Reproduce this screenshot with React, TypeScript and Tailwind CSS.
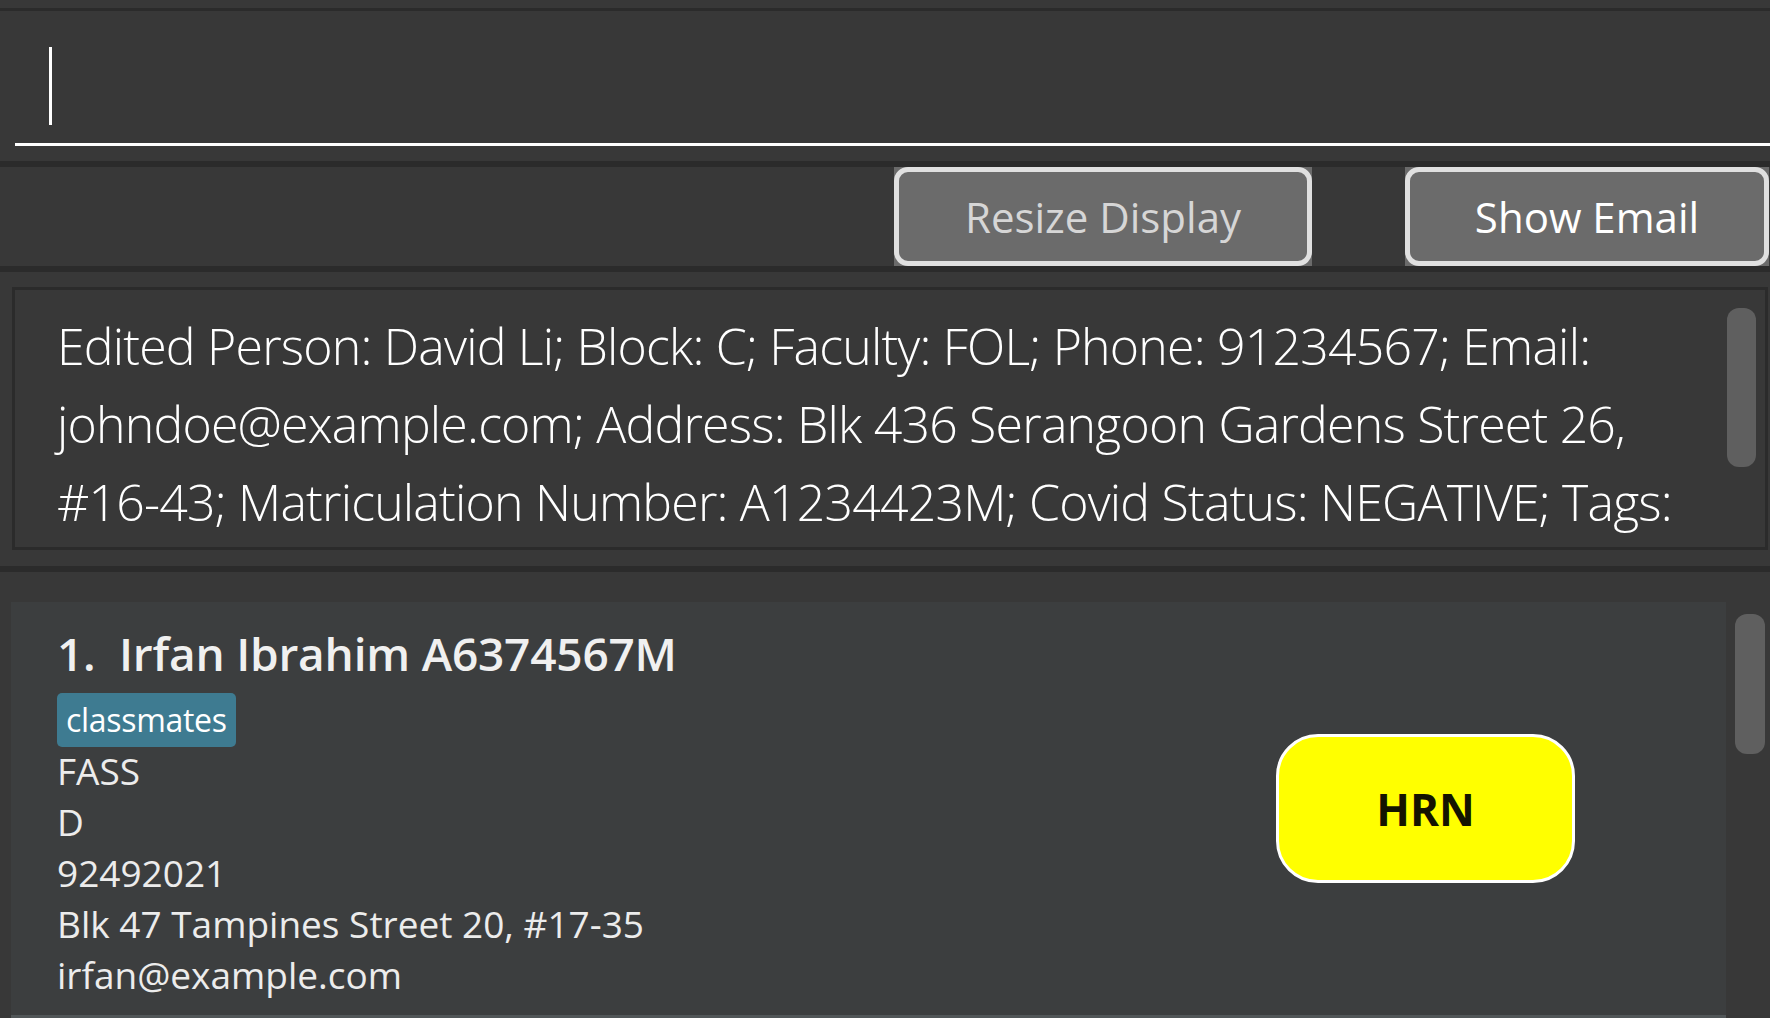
const resultLines = [
  "Edited Person: David Li; Block: C; Faculty: FOL; Phone: 91234567; Email:",
  "johndoe@example.com; Address: Blk 436 Serangoon Gardens Street 26,",
  "#16-43; Matriculation Number: A1234423M; Covid Status: NEGATIVE; Tags:",
];

const details = ["FASS", "D", "92492021", "Blk 47 Tampines Street 20, #17-35", "irfan@example.com"];

function Separator() {
  return <div className="h-[6px] shrink-0 bg-[#2b2b2b]" />;
}

function CommandBox() {
  return (
    <div className="h-[150px] shrink-0 pt-[36px] pl-[15px]">
      <div className="ml-[34px] h-[78px] w-[3px] bg-white" />
      <div className="mt-[18px] h-[3px] bg-white" />
    </div>
  );
}

function ButtonBar() {
  return (
    <div className="flex h-[99px] shrink-0 pl-[894px] gap-[93px]">
      <div className="w-[418px] h-full bg-[#6b6b6b]">
        <div className="flex h-full items-center justify-center rounded-[14px] border-[5px] border-[#e0e0e0] bg-[#6b6b6b] text-[42px] font-normal text-[#d6d6d6]">
          Resize Display
        </div>
      </div>
      <div className="w-[364px] h-full bg-[#6b6b6b]">
        <div className="flex h-full items-center justify-center rounded-[14px] border-[5px] border-[#e0e0e0] bg-[#6b6b6b] text-[42px] font-normal text-white">
          Show Email
        </div>
      </div>
    </div>
  );
}

function ResultDisplay() {
  return (
    <div className="h-[294px] shrink-0 pt-[15px] pl-[12px] pr-[2px] pb-[16px]">
      <div className="relative h-full overflow-hidden border-[3px] border-[#2b2b2b] bg-[#383838] pl-[42px] pt-[17px]">
        {resultLines.map((line) => (
          <div key={line} className="whitespace-nowrap text-[50px] leading-[78px] tracking-[-0.8px] font-light text-white">
            {line}
          </div>
        ))}
        <div className="absolute right-[9px] top-[18px] h-[159px] w-[29px] rounded-[12px] bg-[#5f5f5f]" />
      </div>
    </div>
  );
}

function PersonCard() {
  return (
    <div className="flex h-[413px] w-[1715px] items-center bg-[#3c3e3f] pl-[46px] pr-[151px]">
      <div className="flex-1 self-stretch pt-[21px]">
        <div className="whitespace-nowrap text-[46px] leading-[60px] tracking-[-0.2px] font-semibold text-[#f0f0f0]">
          1.&nbsp;&nbsp;Irfan Ibrahim A6374567M
        </div>
        <div className="mt-[10px] flex">
          <span className="flex h-[54px] items-center rounded-[5px] bg-[#3e7b91] px-[9px] text-[32px] tracking-[-0.3px] text-white">
            classmates
          </span>
        </div>
        <div className="-mt-[2px]">
          {details.map((d) => (
            <div key={d} className="whitespace-nowrap text-[37px] leading-[51px] text-[#ececec]">
              {d}
            </div>
          ))}
        </div>
      </div>
      <div className="flex h-[149px] w-[299px] items-center justify-center rounded-[42px] border-[3px] border-white bg-[#ffff00] text-[44px] font-bold text-[#141400]">
        HRN
      </div>
    </div>
  );
}

function PersonList() {
  return (
    <div className="relative flex-1 overflow-hidden pt-[30px] pl-[11px]">
      <PersonCard />
      <div className="h-[40px] w-[1715px] bg-[#515658]" />
      <div className="absolute left-[1735px] top-[42px] h-[140px] w-[30px] rounded-[12px] bg-[#5f5f5f]" />
    </div>
  );
}

export default function App() {
  return (
    <div
      className="flex h-[1018px] w-[1770px] flex-col overflow-hidden bg-[#383838]"
      style={{ fontFamily: '"Open Sans", "Noto Sans", sans-serif' }}
    >
      <div className="h-[8px] shrink-0" />
      <div className="h-[3px] shrink-0 bg-[#2b2b2b]" />
      <CommandBox />
      <Separator />
      <ButtonBar />
      <Separator />
      <ResultDisplay />
      <Separator />
      <PersonList />
    </div>
  );
}
